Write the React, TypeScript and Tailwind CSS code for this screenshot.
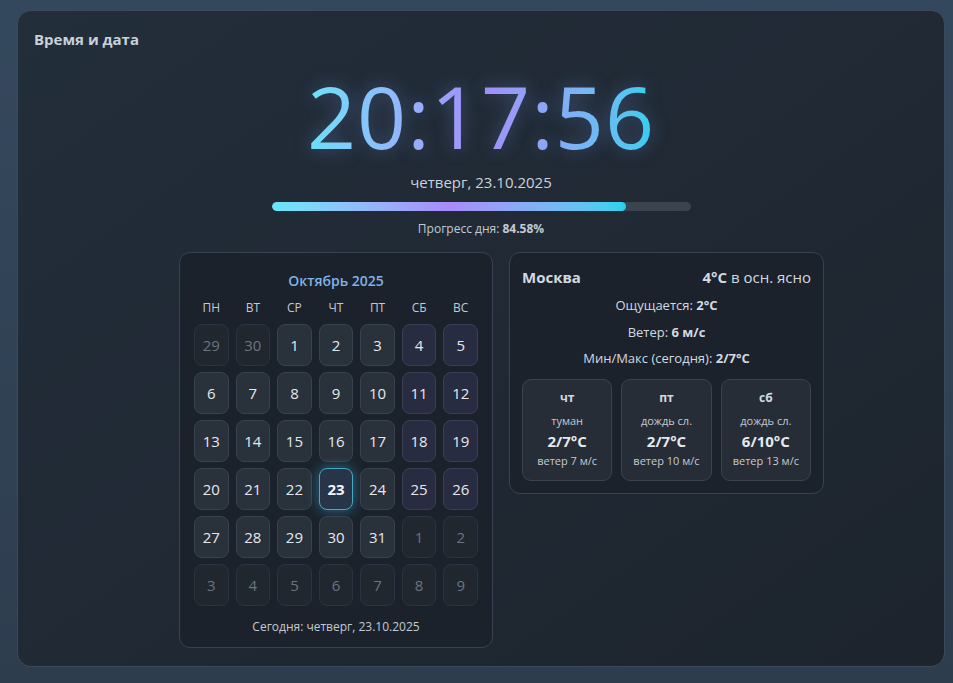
import React from 'react';

const WEEKDAYS = ['ПН', 'ВТ', 'СР', 'ЧТ', 'ПТ', 'СБ', 'ВС'];

type Day = { n: number; other: boolean };

const buildDays = (): Day[] => {
    const days: Day[] = [{ n: 29, other: true }, { n: 30, other: true }];
    for (let i = 1; i <= 31; i++) days.push({ n: i, other: false });
    for (let i = 1; i <= 9; i++) days.push({ n: i, other: true });
    return days;
};

const FORECAST = [
    { day: 'чт', desc: 'туман', temp: '2/7°C', wind: 'ветер 7 м/с' },
    { day: 'пт', desc: 'дождь сл.', temp: '2/7°C', wind: 'ветер 10 м/с' },
    { day: 'сб', desc: 'дождь сл.', temp: '6/10°C', wind: 'ветер 13 м/с' },
];

function Calendar() {
    const days = buildDays();
    return (
        <div className="w-[314px] rounded-[11px] border border-[#384250] bg-[#1b222b] px-[14px] pt-[18px] pb-[12px]">
            <div className="text-center text-[14px] leading-[20px] font-semibold text-[#7fb2e6]">Октябрь 2025</div>
            <div className="mt-[9px] grid grid-cols-7 gap-x-[7px] text-center text-[12px] leading-[16px] text-[#c3cad3]">
                {WEEKDAYS.map(w => <div key={w}>{w}</div>)}
            </div>
            <div className="mt-[8px] grid grid-cols-7 gap-x-[7px] gap-y-[6px]">
                {days.map((d, i) => {
                    const col = i % 7;
                    const weekend = col >= 5;
                    const today = !d.other && d.n === 23;
                    let cls = 'border-[#39424e] bg-[#29313b] text-[#e5e9ee]';
                    if (weekend) cls = 'border-[#3a4052] bg-[#282c40] text-[#e5e9ee]';
                    if (d.other) cls = 'border-[#2c333e] bg-[#20272f] text-[#6b7480]';
                    if (today) cls = 'border-[#4aa6c2] bg-[#283549] text-[#f1f5f9] font-bold shadow-[0_0_14px_rgba(56,189,248,0.5)]';
                    return (
                        <div key={i} className={`flex h-[42px] items-center justify-center rounded-[8px] border text-[15px] ${cls}`}>
                            {d.n}
                        </div>
                    );
                })}
            </div>
            <div className="mt-[13px] text-center text-[12px] leading-[16px] text-[#c3cad3]">Сегодня: четверг, 23.10.2025</div>
        </div>
    );
}

function Weather() {
    return (
        <div className="w-[315px] self-start rounded-[11px] border border-[#384250] bg-[#1b222b] px-[12px] pt-[13px] pb-[12px] text-[#d3d9e0]">
            <div className="flex items-baseline justify-between text-[15px] leading-[22px]">
                <span className="font-bold">Москва</span>
                <span><b>4°C</b> в осн. ясно</span>
            </div>
            <div className="mt-[8px] text-center text-[13px] leading-[18px]">Ощущается: <b>2°C</b></div>
            <div className="mt-[9px] text-center text-[13px] leading-[18px]">Ветер: <b>6 м/с</b></div>
            <div className="mt-[8px] text-center text-[13px] leading-[18px]">Мин/Макс (сегодня): <b>2/7°C</b></div>
            <div className="mt-[12px] grid grid-cols-3 gap-[9px]">
                {FORECAST.map(f => (
                    <div key={f.day} className="flex h-[102px] flex-col items-center rounded-[9px] border border-[#3a434f] bg-[#262d36] pt-[10px]">
                        <div className="text-[12px] leading-[16px] font-bold">{f.day}</div>
                        <div className="mt-[8px] text-[11px] leading-[14px] text-[#c3cad3]">{f.desc}</div>
                        <div className="mt-[3px] text-[15px] leading-[20px] font-bold text-[#e5e9ee]">{f.temp}</div>
                        <div className="mt-[3px] text-[11px] leading-[14px] text-[#c3cad3]">{f.wind}</div>
                    </div>
                ))}
            </div>
        </div>
    );
}

export default function App() {
    return (
        <div className="min-h-[683px] bg-gradient-to-b from-[#34485d] to-[#2e3d4e] pl-[17px] pr-[8px] pt-[10px] pb-[16px] font-['Open_Sans',sans-serif]">
            <div className="h-[657px] rounded-[14px] border border-[#3b4a5a] bg-gradient-to-br from-[#232e3b] to-[#1d242d] px-[16px] pt-[18px]">
                <h2 className="text-[15px] leading-[20px] font-bold text-[#c9d0d8]">Время и дата</h2>

                <div className="flex flex-col items-center">
                    <div
                        className="mt-[22px] bg-gradient-to-r from-[#67e8f9] via-[#a78bfa] to-[#22d3ee] bg-clip-text text-[86px] leading-[90px] font-normal tracking-[1px] text-transparent [text-shadow:0_0_18px_rgba(125,170,255,0.35)]"
                    >
                        20:17:56
                    </div>
                    <div className="mt-[11px] text-[15px] leading-[20px] text-[#cbd2da]">четверг, 23.10.2025</div>
                    <div className="mt-[10px] h-[9px] w-[419px] overflow-hidden rounded-full bg-[#3a4450]">
                        <div className="h-full rounded-full bg-gradient-to-r from-[#67e8f9] via-[#a78bfa] to-[#22d3ee]" style={{ width: '84.58%' }} />
                    </div>
                    <div className="mt-[10px] text-[12px] leading-[16px] text-[#c3cad3]">Прогресс дня: <b>84.58%</b></div>
                </div>

                <div className="mt-[15px] flex justify-center gap-[16px] pl-[41px]">
                    <Calendar />
                    <Weather />
                </div>
            </div>
        </div>
    );
}
